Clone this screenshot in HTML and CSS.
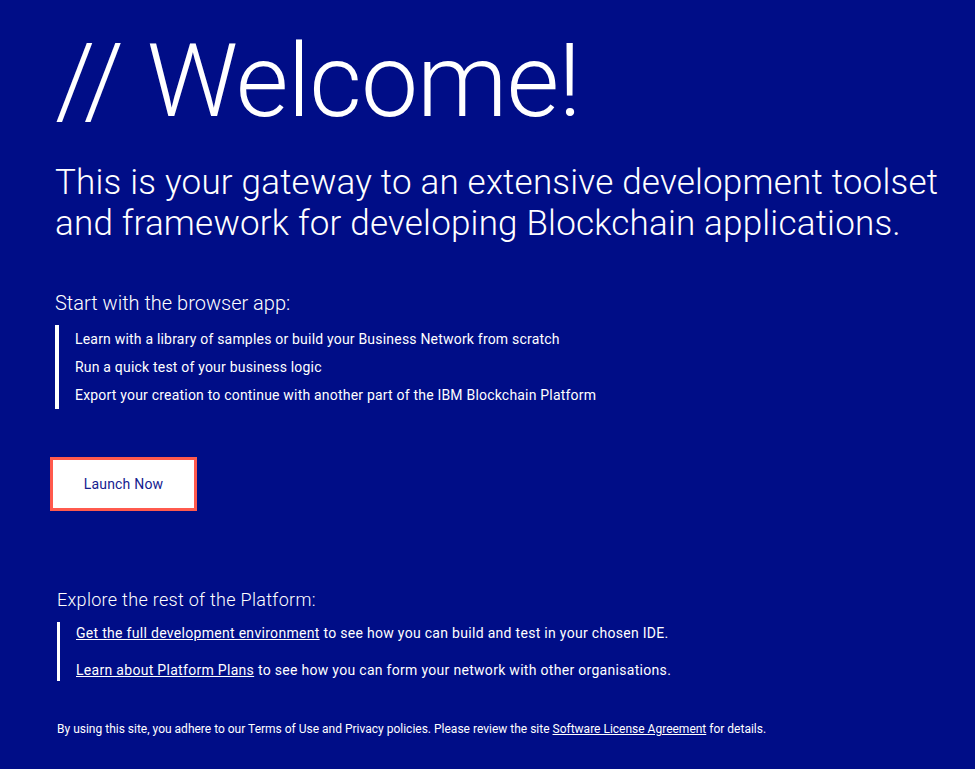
FILE: index.html
```html
<!DOCTYPE html>
<html lang="en">
<head>
<meta charset="utf-8">
<title>Welcome</title>
<link rel="stylesheet" href="styles.css">
</head>
<body>
<main class="page">
  <h1 class="title">// Welcome!</h1>
  <p class="lead">This is your gateway to an extensive development toolset and framework for developing Blockchain applications.</p>

  <section class="start">
    <h2 class="section-head start-head">Start with the browser app:</h2>
    <ul class="list">
      <li>Learn with a library of samples or build your Business Network from scratch</li>
      <li>Run a quick test of your business logic</li>
      <li>Export your creation to continue with another part of the IBM Blockchain Platform</li>
    </ul>
  </section>

  <div class="cta">
    <button class="launch">Launch Now</button>
  </div>

  <section class="explore">
    <h2 class="section-head explore-head">Explore the rest of the Platform:</h2>
    <ul class="list links">
      <li><a href="#">Get the full development environment</a> to see how you can build and test in your chosen IDE.</li>
      <li><a href="#">Learn about Platform Plans</a> to see how you can form your network with other organisations.</li>
    </ul>
  </section>

  <p class="footer">By using this site, you adhere to our Terms of Use and Privacy policies. Please review the site <a href="#">Software License Agreement</a> for details.</p>
</main>
</body>
</html>
```
FILE: styles.css
```css
html, body {
  margin: 0;
  padding: 0;
  background: #000d87;
  color: #ffffff;
  font-family: "Roboto", "Liberation Sans", sans-serif;
}
.page {
  padding: 0 0 0 55px;
  min-height: 769px;
  box-sizing: border-box;
}
.title {
  margin: 0;
  padding-top: 22px;
  font-size: 102px;
  font-weight: 300;
  line-height: 118px;
  letter-spacing: -1px;
}
.lead {
  margin: 22px 0 0;
  font-size: 35px;
  font-weight: 300;
  line-height: 41px;
  letter-spacing: 0.2px;
  max-width: 910px;
}
.start {
  margin-top: 47px;
}
.section-head {
  margin: 0;
  line-height: 24px;
}
.start-head {
  font-size: 20px;
  font-weight: 300;
  letter-spacing: 0;
}
.explore-head {
  font-size: 18px;
  font-weight: 300;
  letter-spacing: 0.3px;
}
.list {
  list-style: none;
  margin: 10px 0 0;
  padding: 0 0 0 16px;
  border-left: 4px solid #ffffff;
}
.list li {
  font-size: 14px;
  line-height: 28px;
  letter-spacing: 0.2px;
}
.cta {
  margin-top: 48px;
}
.launch {
  margin-left: -5px;
  width: 147px;
  height: 54px;
  background: #ffffff;
  border: 3px solid #ff5a4d;
  color: #14208f;
  font-family: inherit;
  font-size: 14px;
  padding: 0;
  letter-spacing: 0.2px;
}
.explore {
  margin-top: 77px;
  padding-left: 2px;
}
.links {
  margin-top: 10px;
  padding-left: 16px;
  border-left-width: 3px;
}
.links li {
  line-height: 22px;
  letter-spacing: 0.3px;
}
.links li + li {
  margin-top: 15px;
}
.list a, .footer a {
  color: #ffffff;
}
.footer {
  margin: 40px 0 0 2px;
  font-size: 12px;
  line-height: 16px;
}
```
